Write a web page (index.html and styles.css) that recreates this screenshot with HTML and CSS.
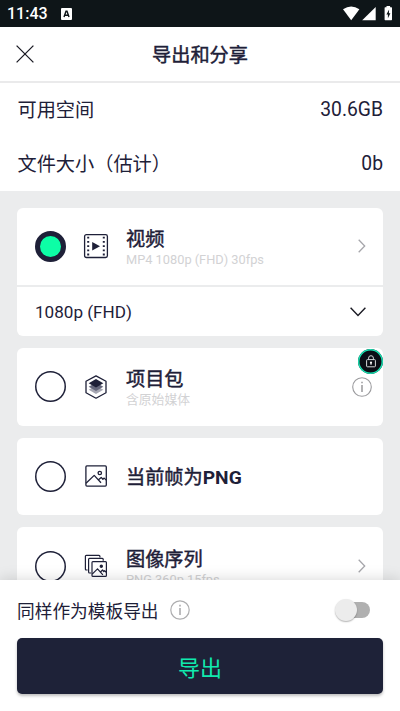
FILE: index.html
```html
<!DOCTYPE html>
<html lang="zh-CN">
<head>
<meta charset="utf-8">
<title>导出和分享</title>
<link rel="stylesheet" href="styles.css">
</head>
<body>
<div class="screen">
  <div class="status">
    <span class="clock">11:43</span>
    <svg class="status-app" width="11" height="12" viewBox="0 0 11 12"><rect width="11" height="12" rx="1" fill="#fff"/><path d="M3 9 5 3.2h1L8 9M3.8 7.2h3.4" fill="none" stroke="#0e1518" stroke-width="1.4"/></svg>
    <svg class="status-icons" width="50" height="16" viewBox="0 0 50 16"><path d="M0 3.3Q8.2-2.3 16.4 3.3L8.2 14.2Z" fill="#fff"/><path d="M32.7 1v13.2H19.2Z" fill="#fff"/><path d="M42.2 1.2h1.300V0h3.600v1.200h1.300q.6 0 .6.600v11.800q0 .6-.6.600h-6.200q-.6 0-.6-.6V1.800q0-.6.600-.6Z" fill="#fff"/><path d="M46.100 3.500 43.400 8.400h1.500v3.800l2.500-5h-1.500Z" fill="#0e1518"/></svg>
  </div>
  <header class="header">
    <svg class="close" width="18" height="18" viewBox="0 0 18 18"><path d="M.6.600 17.400 17.400M17.400.600.600 17.400" stroke="#1b1b24" stroke-width="1.300"/></svg>
    <h1 class="title">导出和分享</h1>
  </header>
  <section class="summary">
    <div class="summary-row"><span>可用空间</span><span class="value">30.6GB</span></div>
    <div class="summary-row"><span>文件大小（估计）</span><span class="value">0b</span></div>
  </section>
  <main class="options">
    <article class="card">
      <div class="option">
        <span class="radio radio-on"></span>
        <svg class="icon" width="26" height="26" viewBox="0 0 26 26"><rect x="1.600" y="1.700" width="22.800" height="22.800" rx="1.800" fill="none" stroke="#1e2038" stroke-width="1.300"/><path d="M5.200 3.800v19M20.800 3.800v19" stroke="#1e2038" stroke-width="2" stroke-dasharray="1.800 2.400"/><path d="M9.200 9v8.600l7.800-4.300Z" fill="#1e2038"/></svg>
        <div class="label"><h2>视频</h2><p>MP4 1080p (FHD) 30fps</p></div>
        <svg class="chevron" width="8" height="14" viewBox="0 0 8 14"><path d="M.7.700 6.700 7 .7 13.300" fill="none" stroke="#a6a6ab" stroke-width="1.300"/></svg>
      </div>
      <div class="resolution"><span>1080p (FHD)</span>
        <svg width="16" height="10" viewBox="0 0 16 10"><path d="M.6.700 8 8.600 15.400.700" fill="none" stroke="#1b1b24" stroke-width="1.400"/></svg>
      </div>
    </article>
    <article class="card">
      <span class="lock"><svg width="10" height="13" viewBox="0 0 10 13"><rect x=".6" y="4.600" width="8.800" height="7.200" rx=".8" fill="none" stroke="#d5d8da"/><path d="M2.600 4.500V3.100a2.400 2.400 0 0 1 4.800 0v1.400M5 8v2" fill="none" stroke="#d5d8da"/><circle cx="5" cy="7.700" r="1.100" fill="#fff"/></svg></span>
      <div class="option">
        <span class="radio"></span>
        <svg class="icon" width="26" height="26" viewBox="0 0 26 26"><path d="M13 1.900 23 7.300v11.400L13 24.200 3 18.700V7.300Z" fill="none" stroke="#1e2038" stroke-width="1.300" stroke-linejoin="round"/><path d="m13 11.500 7.300 4.200-7.300 4.200-7.300-4.200Z" fill="#a6a7b3"/><path d="m13 8.500 7.300 4.200-7.300 4.200-7.300-4.200Z" fill="#65677c"/><path d="m13 5 7.300 4.200-7.300 4.400-7.300-4.400Z" fill="#1e2038"/></svg>
        <div class="label"><h2>项目包</h2><p>含原始媒体</p></div>
        <svg class="info" width="20" height="20" viewBox="0 0 20 20"><circle cx="10" cy="10" r="9.300" fill="none" stroke="#9b9b9e" stroke-width="1.100"/><path d="M10 8v7M10 4.700v1.600" stroke="#929295" stroke-width="1.400"/></svg>
      </div>
    </article>
    <article class="card">
      <div class="option">
        <span class="radio"></span>
        <svg class="icon" width="26" height="26" viewBox="0 0 26 26"><g fill="none" stroke="#1e2038" stroke-width="1.300" stroke-linejoin="round"><rect x="2.900" y="2.900" width="20.400" height="20.200" rx="1"/><circle cx="16.800" cy="10" r="1.700"/><path d="m3 20.200 8.200-7.800 6.800 7.300M15.500 16.800l2.700-2.400 1.700 1.900 1.300-1.200 2 2"/></g></svg>
        <div class="label label-single"><h2>当前帧为<span class="latin">PNG</span></h2></div>
      </div>
    </article>
    <article class="card">
      <div class="option">
        <span class="radio"></span>
        <svg class="icon" width="26" height="26" viewBox="0 0 26 26"><g fill="none" stroke="#1e2038" stroke-width="1.200" stroke-linejoin="round"><path d="M4.600 17H3.300q-.9 0-.9-.9V3.300q0-.9.900-.9h12.700q.9 0 .9.900v1.200"/><path d="M8.100 20H6.500q-.9 0-.9-.9V6.300q0-.9.900-.9h12.800q.9 0 .9.900v1.500"/><rect x="9" y="8.700" width="14.400" height="14.700" rx=".9"/><path d="m9.200 21.200 5.300-5.400 5.400 6M17.500 19l2-2 1.300 1.500.8-.8 1.700 1.600"/><circle cx="18.300" cy="13.200" r="1.100" fill="#1e2038"/></g></svg>
        <div class="label"><h2>图像序列</h2><p>PNG 360p 15fps</p></div>
        <svg class="chevron" width="8" height="14" viewBox="0 0 8 14"><path d="M.7.700 6.700 7 .7 13.300" fill="none" stroke="#a6a6ab" stroke-width="1.300"/></svg>
      </div>
    </article>
  </main>
  <footer class="footer">
    <div class="template-row">
      <span>同样作为模板导出</span>
      <svg width="20" height="20" viewBox="0 0 20 20"><circle cx="10" cy="10" r="9.200" fill="none" stroke="#adadaf" stroke-width="1.200"/><path d="M10 8v7M10 4.700v1.700" stroke="#a0a0a3" stroke-width="1.400"/></svg>
      <span class="switch"><span class="knob"></span></span>
    </div>
    <button class="export">导出</button>
  </footer>
</div>
</body>
</html>
```
FILE: styles.css
```css
* { box-sizing: border-box; }
body {
  margin: 0;
  background: #fff;
  color: #1e2038;
  font-family: Roboto, "Noto Sans CJK SC", sans-serif;
}
h1, h2, p { margin: 0; }
svg { display: block; flex: none; }
.screen {
  display: flex;
  flex-direction: column;
  width: 400px;
  height: 711px;
  overflow: hidden;
}
.status {
  display: flex;
  align-items: center;
  flex: none;
  height: 26.5px;
  padding: 1px 7px 0;
  background: #0e1518;
  color: #fff;
}
.clock { width: 54px; padding-top: 1px; font-size: 16px; font-weight: 500; line-height: 20px; }
.status-icons { margin-left: auto; }
.header {
  display: grid;
  grid-template-columns: 40px 1fr 40px;
  align-items: center;
  flex: none;
  height: 56px;
  padding: 0 16px;
  border-bottom: 2px solid #eaeaeb;
}
.title {
  grid-column: 2;
  padding-top: 5px;
  font-size: 19.200px;
  font-weight: 400;
  line-height: 28px;
  text-align: center;
  -webkit-text-stroke: .45px currentColor;
}
.summary { flex: none; height: 108px; }
.summary-row {
  display: flex;
  align-items: center;
  justify-content: space-between;
  height: 54px;
  padding: 2px 17px 0 17.500px;
  font-size: 19.200px;
  line-height: 28px;
}
.value { padding-bottom: 2px; font-size: 19.300px; }
.options {
  display: flex;
  flex-direction: column;
  gap: 12px;
  flex: 1;
  min-height: 0;
  padding: 17px 17px 0;
  background: #ebeced;
  overflow: hidden;
}
.card {
  position: relative;
  flex: none;
  background: #fff;
  border-radius: 6px;
}
.option {
  display: flex;
  align-items: center;
  height: 77.600px;
  padding: 0 17px 0 18px;
}
.radio {
  flex: none;
  width: 31px;
  height: 31px;
  margin-right: 17px;
  border-radius: 50%;
  box-shadow: inset 0 0 0 1.500px #1e2038;
}
.radio-on { border: 5px solid #1e2038; background: #0dfea6; box-shadow: none; }
.icon { margin-right: 17px; }
.label { flex: 1; padding-top: 4px; }
.label-single { padding-top: 3px; }
.label h2 {
  font-size: 19.200px;
  font-weight: 400;
  line-height: 24px;
  -webkit-text-stroke: .45px currentColor;
}
.label .latin { font-weight: 700; -webkit-text-stroke: 0; }
.label p {
  margin-top: -1px;
  font-size: 12.800px;
  line-height: 18px;
  color: #d2d2d4;
}
.info { margin-right: -6px; }
.resolution {
  display: flex;
  align-items: center;
  justify-content: space-between;
  height: 51px;
  padding: 1px 17px 0 18px;
  border-top: 2px solid #ebeced;
  font-size: 17.100px;
}
.lock {
  position: absolute;
  top: 1px;
  right: 0;
  display: grid;
  place-items: center;
  width: 25px;
  height: 25px;
  border-radius: 50%;
  background: #0b0d16;
  box-shadow: inset 0 0 0 1.500px #19dfb0;
}
.footer {
  position: relative;
  flex: none;
  height: 131.500px;
  padding: 0 17px;
  background: #fff;
  box-shadow: 0 0 14px rgba(0, 0, 0, .17);
}
.template-row {
  display: flex;
  align-items: center;
  gap: 11px;
  height: 58.500px;
  padding-top: 3px;
  font-size: 17.700px;
}
.switch {
  position: relative;
  width: 32px;
  height: 16px;
  margin-left: auto;
  margin-right: 13px;
  border-radius: 8px;
  background: #b0b0b0;
}
.knob {
  position: absolute;
  top: -3.500px;
  left: -3px;
  width: 22px;
  height: 22px;
  border-radius: 50%;
  background: #ececec;
  box-shadow: 0 1px 1.500px rgba(0, 0, 0, .3);
}
.export {
  display: block;
  width: 100%;
  height: 55.500px;
  padding: 6px 0 0;
  border: 0;
  border-radius: 5px;
  background: #1e2238;
  color: #10ebae;
  font: 22px/32px Roboto, "Noto Sans CJK SC", sans-serif;
  box-shadow: 0 2px 3px rgba(0, 0, 0, .25);
}
```
